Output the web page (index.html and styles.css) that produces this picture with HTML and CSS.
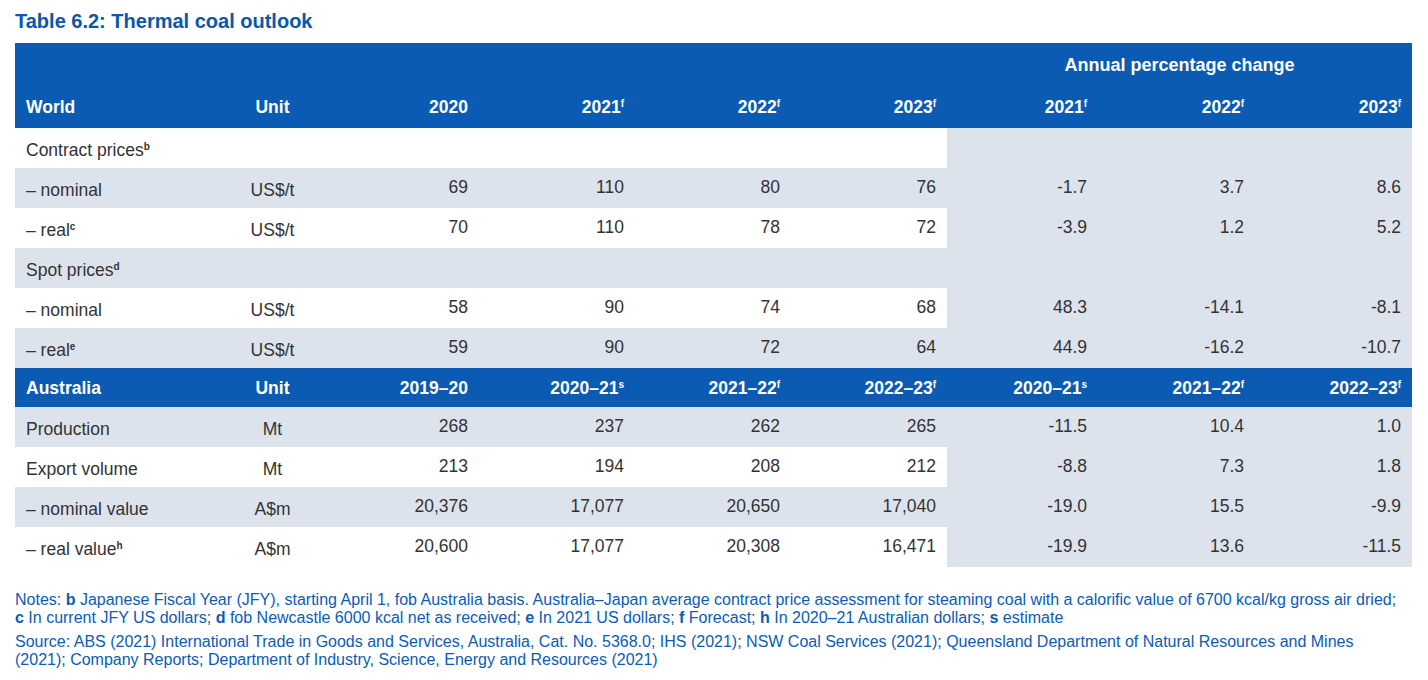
FILE: index.html
```html
<!DOCTYPE html>
<html>
<head>
<meta charset="utf-8">
<link rel="stylesheet" href="styles.css">
</head>
<body>
<h1 class="title">Table 6.2: Thermal coal outlook</h1>
<table class="outlook">
  <colgroup>
    <col class="c-label"><col class="c-unit"><col class="c-v1"><col class="c-v"><col class="c-v"><col class="c-v"><col class="c-ch1"><col class="c-ch"><col class="c-ch">
  </colgroup>
  <thead>
    <tr class="head-top">
      <th colspan="6"></th>
      <th colspan="3" class="apc">Annual percentage change</th>
    </tr>
    <tr class="head">
      <th class="lbl">World</th><th class="unit">Unit</th>
      <th class="num">2020</th><th class="num">2021<sup>f</sup></th><th class="num">2022<sup>f</sup></th><th class="num">2023<sup>f</sup></th>
      <th class="num">2021<sup>f</sup></th><th class="num">2022<sup>f</sup></th><th class="num">2023<sup>f</sup></th>
    </tr>
  </thead>
  <tbody>
    <tr class="white">
      <td class="lbl">Contract prices<sup>b</sup></td><td></td><td></td><td></td><td></td><td></td>
      <td class="ch"></td><td class="ch"></td><td class="ch"></td>
    </tr>
    <tr class="shade">
      <td class="lbl">– nominal</td><td class="unit">US$/t</td>
      <td class="num">69</td><td class="num">110</td><td class="num">80</td><td class="num">76</td>
      <td class="num ch">-1.7</td><td class="num ch">3.7</td><td class="num ch">8.6</td>
    </tr>
    <tr class="white">
      <td class="lbl">– real<sup>c</sup></td><td class="unit">US$/t</td>
      <td class="num">70</td><td class="num">110</td><td class="num">78</td><td class="num">72</td>
      <td class="num ch">-3.9</td><td class="num ch">1.2</td><td class="num ch">5.2</td>
    </tr>
    <tr class="shade">
      <td class="lbl">Spot prices<sup>d</sup></td><td></td><td></td><td></td><td></td><td></td>
      <td class="ch"></td><td class="ch"></td><td class="ch"></td>
    </tr>
    <tr class="white">
      <td class="lbl">– nominal</td><td class="unit">US$/t</td>
      <td class="num">58</td><td class="num">90</td><td class="num">74</td><td class="num">68</td>
      <td class="num ch">48.3</td><td class="num ch">-14.1</td><td class="num ch">-8.1</td>
    </tr>
    <tr class="shade">
      <td class="lbl">– real<sup>e</sup></td><td class="unit">US$/t</td>
      <td class="num">59</td><td class="num">90</td><td class="num">72</td><td class="num">64</td>
      <td class="num ch">44.9</td><td class="num ch">-16.2</td><td class="num ch">-10.7</td>
    </tr>
    <tr class="head head-au">
      <th class="lbl">Australia</th><th class="unit">Unit</th>
      <th class="num">2019–20</th><th class="num">2020–21<sup>s</sup></th><th class="num">2021–22<sup>f</sup></th><th class="num">2022–23<sup>f</sup></th>
      <th class="num">2020–21<sup>s</sup></th><th class="num">2021–22<sup>f</sup></th><th class="num">2022–23<sup>f</sup></th>
    </tr>
    <tr class="shade">
      <td class="lbl">Production</td><td class="unit">Mt</td>
      <td class="num">268</td><td class="num">237</td><td class="num">262</td><td class="num">265</td>
      <td class="num ch">-11.5</td><td class="num ch">10.4</td><td class="num ch">1.0</td>
    </tr>
    <tr class="white">
      <td class="lbl">Export volume</td><td class="unit">Mt</td>
      <td class="num">213</td><td class="num">194</td><td class="num">208</td><td class="num">212</td>
      <td class="num ch">-8.8</td><td class="num ch">7.3</td><td class="num ch">1.8</td>
    </tr>
    <tr class="shade">
      <td class="lbl">– nominal value</td><td class="unit">A$m</td>
      <td class="num">20,376</td><td class="num">17,077</td><td class="num">20,650</td><td class="num">17,040</td>
      <td class="num ch">-19.0</td><td class="num ch">15.5</td><td class="num ch">-9.9</td>
    </tr>
    <tr class="white">
      <td class="lbl">– real value<sup>h</sup></td><td class="unit">A$m</td>
      <td class="num">20,600</td><td class="num">17,077</td><td class="num">20,308</td><td class="num">16,471</td>
      <td class="num ch">-19.9</td><td class="num ch">13.6</td><td class="num ch">-11.5</td>
    </tr>
  </tbody>
</table>
<div class="notes">
  <p>Notes: <b>b</b> Japanese Fiscal Year (JFY), starting April 1, fob Australia basis. Australia–Japan average contract price assessment for steaming coal with a calorific value of 6700 kcal/kg gross air dried;<br><b>c</b> In current JFY US dollars; <b>d</b> fob Newcastle 6000 kcal net as received; <b>e</b> In 2021 US dollars; <b>f</b> Forecast; <b>h</b> In 2020–21 Australian dollars; <b>s</b> estimate</p>
  <p>Source: ABS (2021) International Trade in Goods and Services, Australia, Cat. No. 5368.0; IHS (2021); NSW Coal Services (2021); Queensland Department of Natural Resources and Mines<br>(2021); Company Reports; Department of Industry, Science, Energy and Resources (2021)</p>
</div>
</body>
</html>
```

FILE: styles.css
```css
html, body {
  margin: 0;
  padding: 0;
  background: #ffffff;
}
body {
  padding: 10px 15px 0 15px;
  font-family: "Liberation Sans", Arial, sans-serif;
}
.title {
  margin: 0;
  font-size: 20px;
  line-height: 23px;
  font-weight: bold;
  color: #0b57ab;
}
.outlook {
  margin-top: 10px;
  border-collapse: collapse;
  border-spacing: 0;
  table-layout: fixed;
  width: 1397px;
  font-size: 17.5px;
  line-height: 20px;
  color: #333333;
}
.c-label { width: 185px; }
.c-unit { width: 145px; }
.c-v1 { width: 134px; }
.c-v { width: 156px; }
.c-ch1 { width: 151px; }
.c-ch { width: 157px; }
.outlook th, .outlook td {
  padding: 0 11px;
  white-space: nowrap;
  vertical-align: middle;
}
.head-top { height: 43px; }
.head-top th {
  background: #0b5ab3;
  color: #ffffff;
  font-size: 18px;
  text-align: center;
  padding-top: 1px;
}
.head { height: 42px; }
.head-au { height: 39px; }
.head th {
  background: #0b5ab3;
  color: #ffffff;
  font-weight: bold;
}
.head th.lbl { padding-top: 0; }
.outlook tbody tr.shade, .outlook tbody tr.white { height: 40px; }
.lbl { text-align: left; }
.unit { text-align: center; }
.num { text-align: right; }
td.lbl, td.unit {
  padding-top: 4px;
}
td.num {
  padding-bottom: 3px;
}
.shade td { background: #dce3ed; }
.white td { background: #ffffff; }
td.ch { background: #dce3ed; }
sup {
  font-size: 10px;
  line-height: 0;
  font-weight: bold;
  vertical-align: 6px;
}
.notes {
  margin-top: 24px;
  font-size: 16px;
  line-height: 18px;
  color: #0a5cb8;
}
.notes p {
  margin: 0 0 6px 0;
  white-space: nowrap;
}
```
